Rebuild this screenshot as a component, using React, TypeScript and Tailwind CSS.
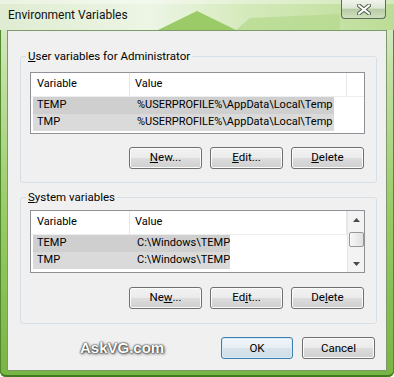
import type { ReactNode } from "react";

type Row = { name: string; value: string };

const userRows: Row[] = [
  { name: "TEMP", value: "%USERPROFILE%\\AppData\\Local\\Temp" },
  { name: "TMP", value: "%USERPROFILE%\\AppData\\Local\\Temp" },
];

const sysRows: Row[] = [
  { name: "TEMP", value: "C:\\Windows\\TEMP" },
  { name: "TMP", value: "C:\\Windows\\TEMP" },
];

function Btn({ children, primary = false }: { children: ReactNode; primary?: boolean }) {
  return (
    <button
      className={`flex h-[22px] items-center justify-center rounded-[3px] border text-[11.5px] leading-none text-black ${
        primary
          ? "w-[72px] border-[#3c7fb1] bg-[linear-gradient(180deg,#f1f6f9_0%,#e6eef4_50%,#d8e4ec_50%,#cfdde7_100%)] shadow-[inset_0_0_0_1px_#d6ebf8]"
          : "w-[73px] border-[#707070] bg-[linear-gradient(180deg,#f2f2f2_0%,#ebebeb_50%,#dddddd_50%,#cfcfcf_100%)] shadow-[inset_0_0_0_1px_#fbfbfb]"
      }`}
    >
      {children}
    </button>
  );
}

function Arrow({ down = false }: { down?: boolean }) {
  return (
    <svg width="7" height="4" viewBox="0 0 7 4">
      <path d={down ? "M0 0 L3.5 4 L7 0Z" : "M0 4 L3.5 0 L7 4Z"} fill="#4a4a4a" />
    </svg>
  );
}

function VarList({ rows, hl, scroll = false, h }: { rows: Row[]; hl: string; scroll?: boolean; h: string }) {
  return (
    <div className={`flex ${h} border border-[#8e9196] bg-white`}>
      <div className="flex min-w-0 flex-1 flex-col">
        <div className="flex h-[24px] border-b border-[#eceef0]">
          <div className="flex w-[99px] items-center border-r border-[#e3e6ea] pl-[6px]">Variable</div>
          <div className="flex w-[217px] items-center border-r border-[#e3e6ea] pl-[5px]">Value</div>
          <div className="flex-1" />
        </div>
        {rows.map((r, i) => (
          <div key={r.name} className="flex h-[17px]">
            <div className={`ml-[2px] flex items-center overflow-hidden ${hl} ${i === 0 ? "bg-[#cfcfcf]" : "bg-[#dadada]"}`}>
              <span className="w-[104px] shrink-0 pl-[4px]">{r.name}</span>
              <span className="shrink-0 whitespace-nowrap">{r.value}</span>
            </div>
          </div>
        ))}
      </div>
      {scroll && (
        <div className="flex w-[17px] flex-col border-l border-[#e6e6e6] bg-[#f3f3f3]">
          <div className="flex h-[17px] items-center justify-center">
            <Arrow />
          </div>
          <div className="mx-auto mt-[4px] h-[15px] w-[15px] rounded-[2px] border border-[#979797] bg-[linear-gradient(90deg,#f8f8f8,#e0e0e0)]" />
          <div className="mt-auto flex h-[17px] items-center justify-center">
            <Arrow down />
          </div>
        </div>
      )}
    </div>
  );
}

export default function App() {
  return (
    <div className="flex h-[377px] w-[394px] flex-col overflow-hidden rounded-b-[6px] bg-[linear-gradient(180deg,#e2eed6_0%,#c6e0a8_18%,#9acb68_55%,#78b444_100%)] shadow-[inset_1px_0_0_#4f8a2d,inset_-1px_0_0_#4f8a2d,inset_0_-2px_0_#3f7a1e] font-['Segoe_UI',Roboto,'Liberation_Sans',sans-serif] text-[11px] text-black">
      {/* title bar */}
      <div className="relative flex h-[30px] shrink-0 items-start justify-between bg-[linear-gradient(90deg,#dfecd1_0%,#edf5e5_38%,#d5eabc_62%,#bcdc96_100%)]">
        <svg className="absolute inset-0" width="394" height="30" viewBox="0 0 394 30">
          <polygon points="158,30 197,11 236,30" fill="#9acb66" />
          <polygon points="236,30 250,18 340,14 340,30" fill="#b4d98c" opacity="0.7" />
          <rect x="0" y="0" width="394" height="4" fill="#ffffff" opacity="0.35" />
        </svg>
        <span className="relative flex h-[30px] items-center pl-[8px] text-[12px] text-[#111]">Environment Variables</span>
        <div className="relative mr-[8px] flex h-[19px] w-[45px] items-center justify-center rounded-b-[4px] border border-t-0 border-[#5b6f58] bg-[linear-gradient(180deg,#f0f4ec_0%,#dde7d4_45%,#b9cba8_52%,#cfe0bd_100%)]">
          <svg width="14" height="11" viewBox="0 0 14 11">
            <path d="M2 1.5 L12 9.5 M12 1.5 L2 9.5" stroke="#4a5a48" strokeWidth="4" strokeLinecap="square" />
            <path d="M2 1.5 L12 9.5 M12 1.5 L2 9.5" stroke="#ffffff" strokeWidth="2" strokeLinecap="square" />
          </svg>
        </div>
      </div>

      {/* client area */}
      <div className="ml-[7px] flex h-[341px] w-[380px] flex-col border border-[#7d9a6a] bg-[#f0f0f0]">
        <fieldset className="ml-[12px] mt-[17px] w-[357px] rounded-[3px] border border-[#d5dfe5] pb-[13px] pl-[9px] pr-[11px] pt-[8px]">
          <legend className="ml-[-4px] px-[2px] text-[11.5px] leading-[16px]">
            <u>U</u>ser variables for Administrator
          </legend>
          <VarList rows={userRows} hl="w-[301px]" h="h-[62px]" />
          <div className="mr-[1px] mt-[13px] flex justify-end gap-[8px]">
            <Btn>
              <u>N</u>ew...
            </Btn>
            <Btn>
              <u>E</u>dit...
            </Btn>
            <Btn>
              <u>D</u>elete
            </Btn>
          </div>
        </fieldset>

        <fieldset className="ml-[12px] mt-[6px] w-[357px] rounded-[3px] border border-[#d5dfe5] pb-[14px] pl-[9px] pr-[11px] pt-[5px]">
          <legend className="ml-[-4px] px-[2px] text-[11.5px] leading-[16px]">
            <u>S</u>ystem variables
          </legend>
          <VarList rows={sysRows} hl="w-[197px]" h="h-[63px]" scroll />
          <div className="mr-[1px] mt-[14px] flex justify-end gap-[8px]">
            <Btn>
              Ne<u>w</u>...
            </Btn>
            <Btn>
              Ed<u>i</u>t...
            </Btn>
            <Btn>
              De<u>l</u>ete
            </Btn>
          </div>
        </fieldset>

        <div className="mt-[13px] flex items-center pr-[11px]">
          <span className="ml-[72px] font-['Liberation_Sans',Arial,sans-serif] text-[15px] font-bold text-white [text-shadow:0_0_1px_#222,0_0_2px_#333,1px_1px_3px_#444]">
            AskVG.com
          </span>
          <div className="ml-auto flex gap-[9px]">
            <Btn primary>OK</Btn>
            <Btn>Cancel</Btn>
          </div>
        </div>
      </div>
    </div>
  );
}
